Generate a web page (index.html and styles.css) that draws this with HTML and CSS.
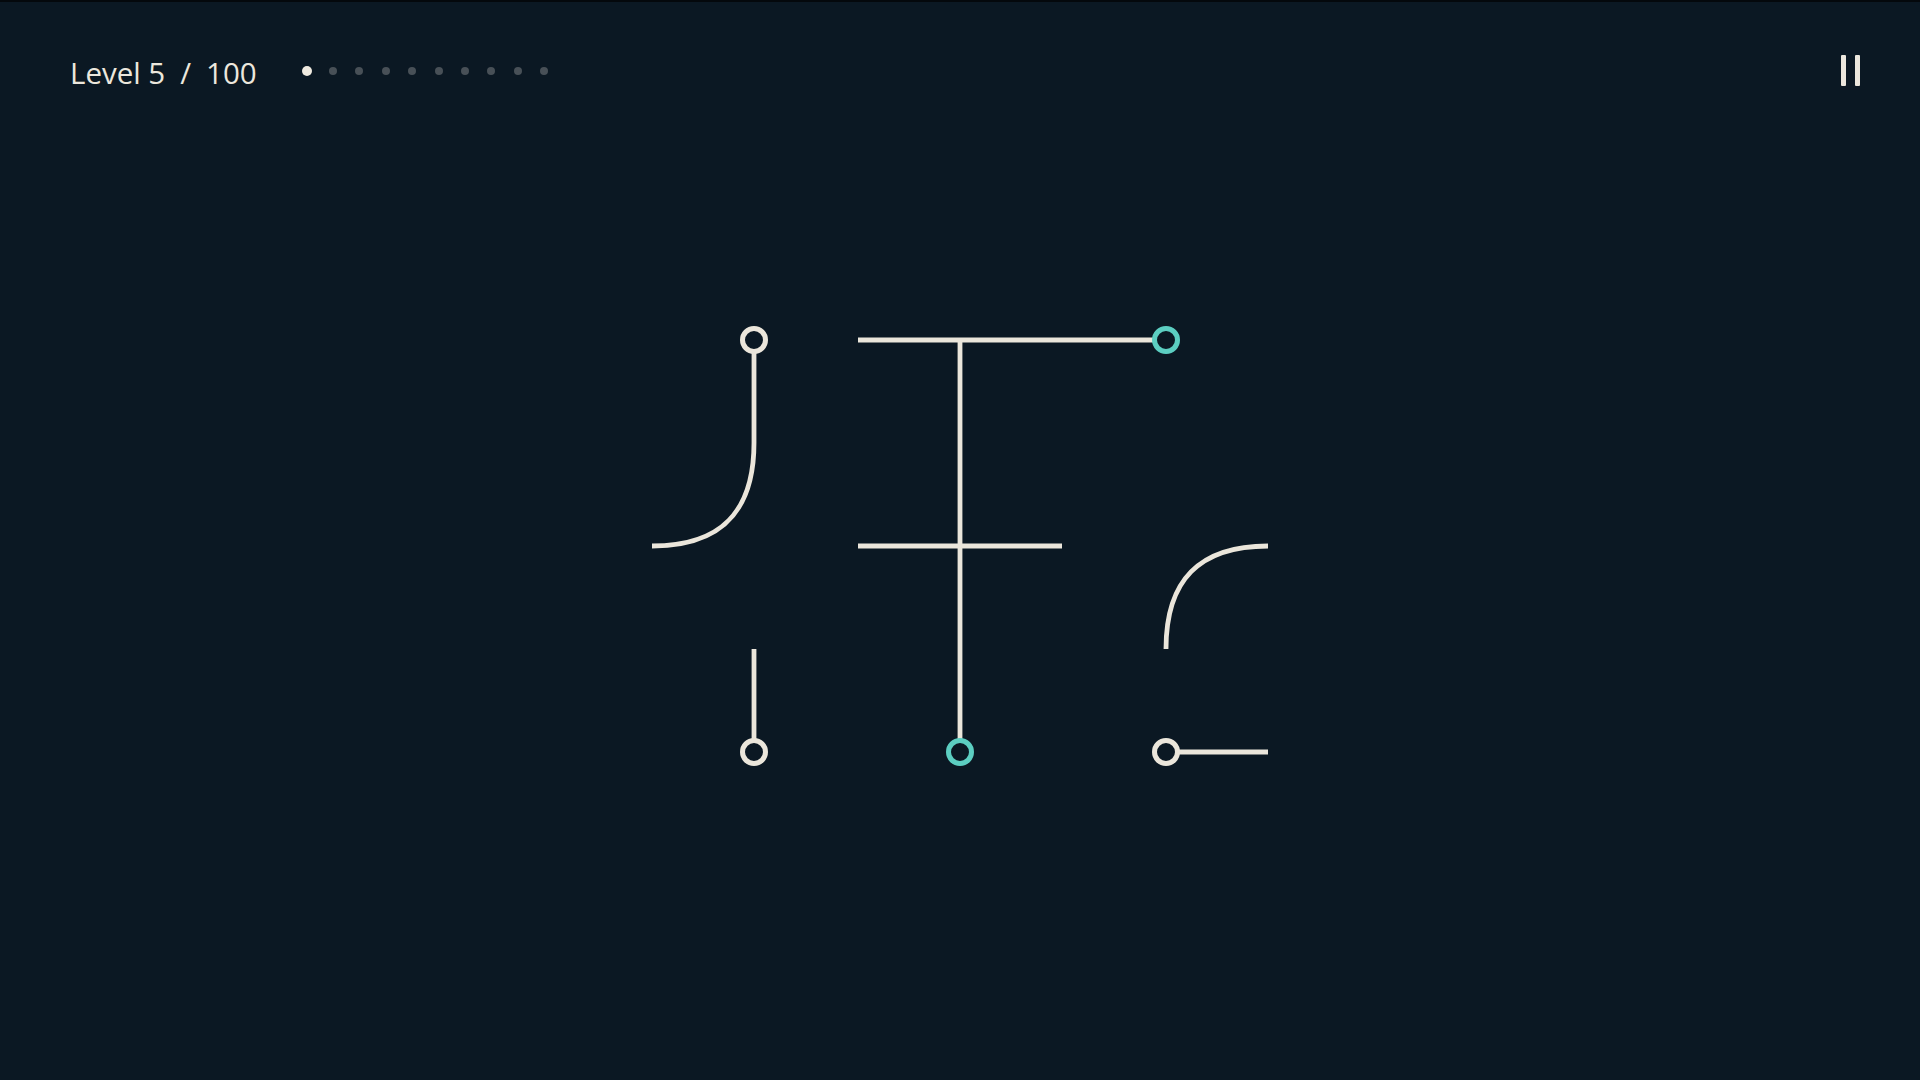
FILE: index.html
```html
<!DOCTYPE html>
<html lang="en">
<head>
<meta charset="utf-8">
<title>Level 5 / 100</title>
<link rel="stylesheet" href="styles.css">
</head>
<body>
<div class="app">
  <header class="topbar">
    <div class="level">
      <span class="level-name">Level 5</span>
      <span class="level-sep">/</span>
      <span class="level-total">100</span>
    </div>
    <div class="dots">
      <span class="dot dot-active"></span>
      <span class="dot"></span>
      <span class="dot"></span>
      <span class="dot"></span>
      <span class="dot"></span>
      <span class="dot"></span>
      <span class="dot"></span>
      <span class="dot"></span>
      <span class="dot"></span>
      <span class="dot"></span>
    </div>
    <button class="pause" aria-label="Pause">
      <span class="pause-bar"></span>
      <span class="pause-bar"></span>
    </button>
  </header>
  <main class="board">
    <svg class="board-svg" viewBox="0 140 1920 940" width="1920" height="940">
      <g class="pipes">
        <path d="M754 340 V443 C754 512 721 546 652 546"/>
        <path d="M858 340 H1166"/>
        <path d="M960 340 V752"/>
        <path d="M858 546 H1062"/>
        <path d="M1166 649 C1166 580 1199 546 1268 546"/>
        <path d="M754 649 V752"/>
        <path d="M1166 752 H1268"/>
      </g>
      <g class="nodes">
        <circle class="node" cx="754" cy="340" r="11.5"/>
        <circle class="node node-lit" cx="1166" cy="340" r="11.5"/>
        <circle class="node" cx="754" cy="752" r="11.5"/>
        <circle class="node node-lit" cx="960" cy="752" r="11.5"/>
        <circle class="node" cx="1166" cy="752" r="11.5"/>
      </g>
    </svg>
  </main>
</div>
</body>
</html>
```

FILE: styles.css
```css
* {
  box-sizing: border-box;
}

html, body {
  margin: 0;
  padding: 0;
  background: #0b1823;
}

body {
  font-family: "Open Sans", "Noto Sans", "Liberation Sans", sans-serif;
  color: #ece7dd;
  overflow: hidden;
}

.app {
  width: 1920px;
  height: 1080px;
  display: flex;
  flex-direction: column;
  background: #0b1823;
  border-top: 2px solid #04080c;
}

.topbar {
  height: 138px;
  flex: none;
  display: flex;
  align-items: flex-start;
  padding: 51px 60px 0 70px;
}

.level {
  display: flex;
  align-items: baseline;
  gap: 15px;
  font-size: 29.5px;
  font-weight: 500;
  line-height: 40px;
  color: #ece7dd;
  white-space: nowrap;
}

.dots {
  display: flex;
  align-items: center;
  gap: 16.4px;
  margin-left: 45px;
  margin-top: 13px;
  height: 10px;
}

.dot {
  width: 8px;
  height: 8px;
  margin: 1px;
  border-radius: 50%;
  background: #485057;
}

.dot-active {
  width: 10px;
  height: 10px;
  margin: 0;
  background: #efeae0;
}

.pause {
  margin-left: auto;
  margin-top: 1.5px;
  display: flex;
  gap: 9px;
  padding: 0;
  border: 0;
  background: transparent;
  cursor: pointer;
}

.pause-bar {
  display: block;
  width: 5px;
  height: 31px;
  background: #ece7dd;
  border-radius: 1px;
}

.board {
  flex: 1;
  display: flex;
}

.board-svg {
  display: block;
}

.pipes path {
  fill: none;
  stroke: #ebe6db;
  stroke-width: 4.8;
  stroke-linecap: butt;
}

.node {
  fill: #0b1823;
  stroke: #ebe6db;
  stroke-width: 5;
}

.node-lit {
  stroke: #5ccec1;
}
```
